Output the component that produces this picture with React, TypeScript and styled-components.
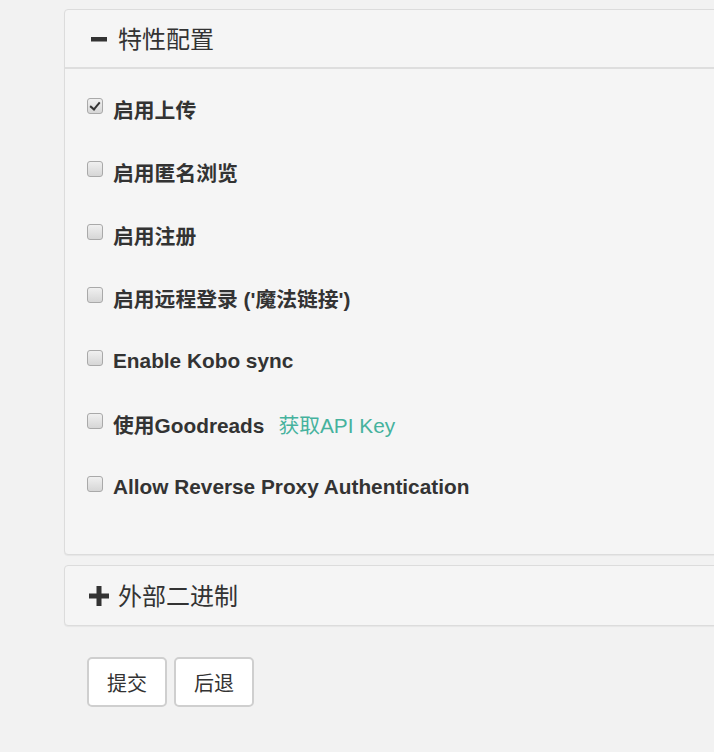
import * as React from "react";
import styled, { createGlobalStyle } from "styled-components";

const GlobalStyle = createGlobalStyle`
  html, body {
    margin: 0;
    padding: 0;
    background: #f2f2f2;
    overflow: hidden;
  }
  body {
    font-family: "Liberation Sans", "Noto Sans CJK SC", Arial, sans-serif;
    color: #333;
  }
`;

const features = [
  { label: "启用上传", checked: true },
  { label: "启用匿名浏览" },
  { label: "启用注册" },
  { label: "启用远程登录 ('魔法链接')" },
  { label: "Enable Kobo sync" },
  { label: "使用Goodreads", link: "获取API Key" },
  { label: "Allow Reverse Proxy Authentication" },
];

const MinusIcon = () => (
  <svg width="16" height="16" viewBox="0 0 16 16">
    <rect x="0" y="6" width="16" height="4.5" fill="#333" />
  </svg>
);

const PlusIcon = () => (
  <svg width="20" height="20" viewBox="0 0 20 20">
    <rect x="0" y="7.5" width="20" height="5" fill="#333" />
    <rect x="7.5" y="0" width="5" height="20" fill="#333" />
  </svg>
);

const App = () => {
  return (
    <Page>
      <GlobalStyle />
      <Panel>
        <PanelHeading>
          <IconBox>
            <MinusIcon />
          </IconBox>
          <span>特性配置</span>
        </PanelHeading>
        <PanelBody>
          {features.map((f) => (
            <Row key={f.label}>
              <Check type="checkbox" defaultChecked={!!f.checked} />
              <Label>{f.label}</Label>
              {f.link && <Link href="#">{f.link}</Link>}
            </Row>
          ))}
        </PanelBody>
      </Panel>
      <Panel>
        <PanelHeading $collapsed>
          <IconBox>
            <PlusIcon />
          </IconBox>
          <span>外部二进制</span>
        </PanelHeading>
      </Panel>
      <Actions>
        <Button>提交</Button>
        <Button>后退</Button>
      </Actions>
    </Page>
  );
};
export default App;

const Page = styled.div`
  padding: 9px 0 0 64px;
  width: 720px;
`;

const Panel = styled.div`
  background: #f5f5f5;
  border: 1px solid #dcdcdc;
  border-radius: 4px;
  box-shadow: 0 1px 1px rgba(0, 0, 0, 0.05);
  margin-bottom: 10px;
  overflow: hidden;
`;

const PanelHeading = styled.div<{ $collapsed?: boolean }>`
  height: 59px;
  box-sizing: border-box;
  display: flex;
  align-items: center;
  gap: 9px;
  padding: 0 0 0 24px;
  font-family: "Noto Sans CJK SC", "Liberation Sans", sans-serif;
  font-size: 24px;
  font-weight: 400;
  color: #333;
  border-bottom: ${(p) => (p.$collapsed ? "none" : "2px solid #dedede")};
  span {
    line-height: 1;
    margin-top: -1px;
  }
`;

const IconBox = styled.div`
  display: flex;
  align-items: center;
  justify-content: center;
  width: 20px;
  height: 20px;
`;

const PanelBody = styled.div`
  padding: 8px 0 36px 22px;
`;

const Row = styled.div`
  height: 63px;
  display: flex;
  align-items: center;
`;

const Check = styled.input`
  appearance: none;
  margin: 0 10px 0 0;
  width: 16px;
  height: 16px;
  box-sizing: border-box;
  border: 1px solid #a9a9a9;
  border-radius: 3px;
  background: linear-gradient(#f0f0f0, #d6d6d6);
  position: relative;
  top: -3px;
  &:checked::after {
    content: "";
    position: absolute;
    left: 4px;
    top: 1px;
    width: 4px;
    height: 8px;
    border: solid #333;
    border-width: 0 2.5px 2.5px 0;
    transform: rotate(40deg);
  }
`;

const Label = styled.label`
  font-family: "Liberation Sans", "Noto Sans CJK SC", sans-serif;
  font-weight: 700;
  font-size: 20.8px;
  color: #333;
`;

const Link = styled.a`
  margin-left: 14px;
  font-family: "Liberation Sans", "Noto Sans CJK SC", sans-serif;
  font-size: 20.8px;
  color: #45b29d;
  text-decoration: none;
`;

const Actions = styled.div`
  display: flex;
  gap: 7px;
  padding: 21px 0 0 23px;
`;

const Button = styled.button`
  height: 50px;
  padding: 0 18px;
  background: #fff;
  border: 2px solid #cfcfcf;
  border-radius: 5px;
  font-family: "Noto Sans CJK SC", "Liberation Sans", sans-serif;
  font-size: 20px;
  color: #333;
  cursor: pointer;
`;
